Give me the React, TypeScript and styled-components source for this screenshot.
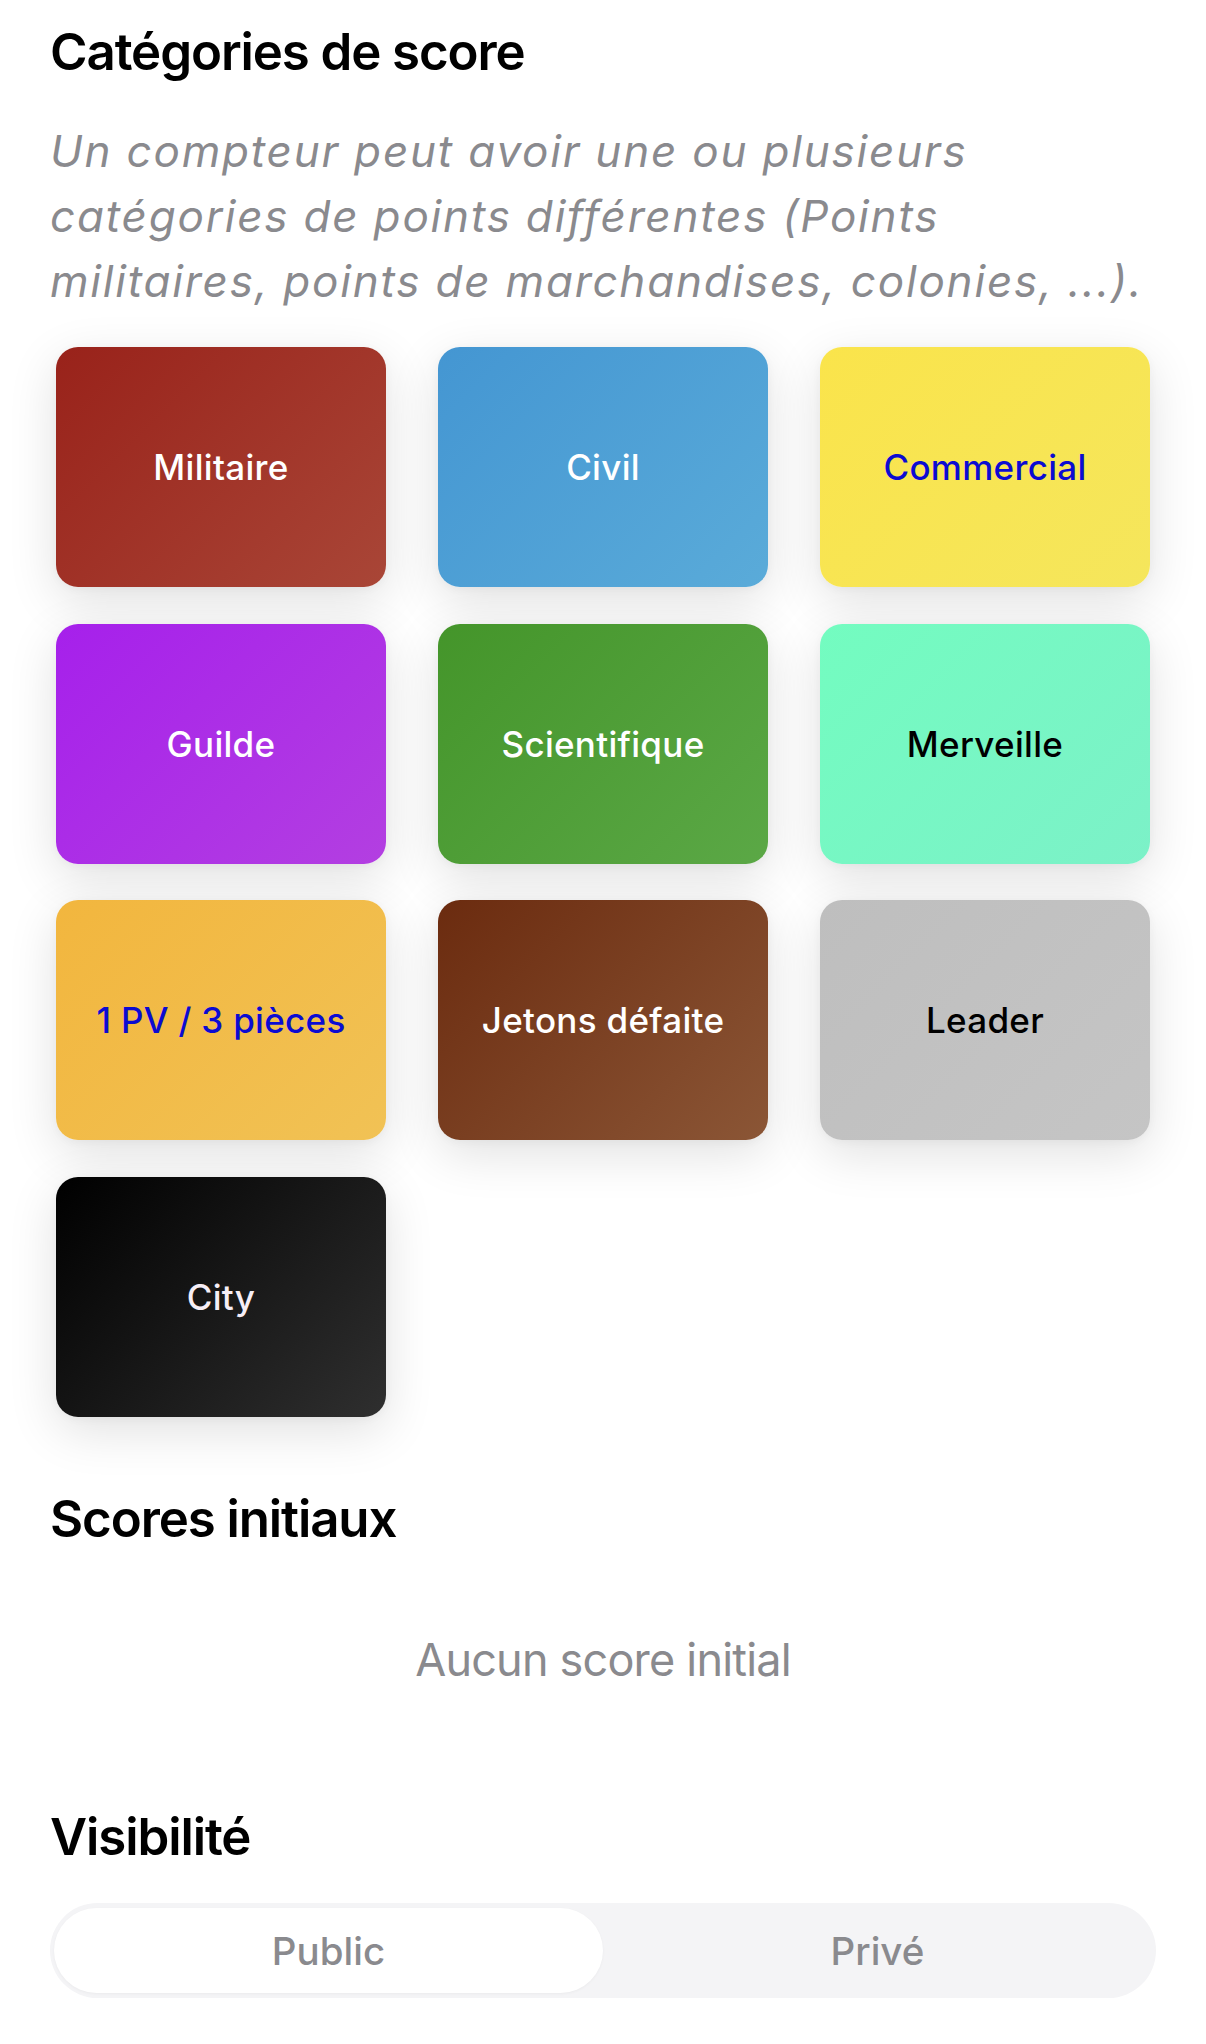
import React from "react";
import styled, { createGlobalStyle } from "styled-components";

const GlobalStyle = createGlobalStyle`
  html, body {
    margin: 0;
    padding: 0;
    background: #ffffff;
  }
  body {
    font-family: Inter, "Noto Sans", "Liberation Sans", sans-serif;
    -webkit-font-smoothing: antialiased;
  }
  * { box-sizing: border-box; }
`;

const Page = styled.main`
  display: flex;
  flex-direction: column;
  padding: 21px 50px 40px;
  width: 1206px;
`;

const SectionTitle = styled.h2<{ $mt?: number }>`
  margin: ${(p) => p.$mt ?? 0}px 0 0;
  font-family: Inter, "Liberation Sans", sans-serif;
  font-weight: 600;
  font-size: 51px;
  line-height: 61px;
  letter-spacing: -1.1px;
  color: #000000;
`;

const Description = styled.p`
  margin: 36.5px 0 0;
  font-family: Inter, "Liberation Sans", sans-serif;
  font-style: italic;
  font-weight: 400;
  font-size: 44px;
  line-height: 65px;
  letter-spacing: 1.8px;
  color: #8a8a8e;
`;

const CardGrid = styled.div`
  display: grid;
  grid-template-columns: repeat(3, 330px);
  column-gap: 52px;
  row-gap: 36.5px;
  padding: 0 6px;
  margin-top: 33.5px;
`;

const Card = styled.div<{ $from: string; $to: string; $fg: string }>`
  height: 240px;
  border-radius: 22px;
  background: linear-gradient(135deg, ${(p) => p.$from}, ${(p) => p.$to});
  color: ${(p) => p.$fg};
  display: flex;
  align-items: center;
  justify-content: center;
  font-family: Inter, "Liberation Sans", sans-serif;
  font-weight: 500;
  font-size: 35px;
  letter-spacing: 0.3px;
  box-shadow: 0 14px 50px rgba(0, 0, 0, 0.12), 0 2px 10px rgba(0, 0, 0, 0.04);
`;

const EmptyText = styled.p`
  margin: 83.5px 0 0;
  text-align: center;
  font-family: Inter, "Liberation Sans", sans-serif;
  font-weight: 400;
  font-size: 45px;
  line-height: 54px;
  letter-spacing: -0.8px;
  color: #8a8a8e;
`;

const Segmented = styled.div`
  display: flex;
  margin-top: 36px;
  height: 95px;
  padding: 5px 4px;
  border-radius: 48px;
  background: #f4f4f6;
`;

const Segment = styled.div<{ $active?: boolean }>`
  flex: 1;
  display: flex;
  align-items: center;
  justify-content: center;
  border-radius: 44px;
  background: ${(p) => (p.$active ? "#ffffff" : "transparent")};
  box-shadow: ${(p) => (p.$active ? "0 1px 3px rgba(0,0,0,0.04)" : "none")};
  font-family: Inter, "Liberation Sans", sans-serif;
  font-weight: 500;
  font-size: 38.5px;
  color: #8a8a8e;
`;

type Category = { label: string; from: string; to: string; fg: string };

const categories: Category[] = [
  { label: "Militaire", from: "#99221a", to: "#a94637", fg: "#ffffff" },
  { label: "Civil", from: "#4496d2", to: "#5aabd9", fg: "#ffffff" },
  { label: "Commercial", from: "#fae44b", to: "#f5e65c", fg: "#0b0bd2" },
  { label: "Guilde", from: "#a620eb", to: "#b33fe1", fg: "#ffffff" },
  { label: "Scientifique", from: "#44952a", to: "#5ba846", fg: "#ffffff" },
  { label: "Merveille", from: "#73fcc0", to: "#7cf1c8", fg: "#000000" },
  { label: "1 PV / 3 pièces", from: "#f2b63e", to: "#f1c255", fg: "#0b0bd2" },
  { label: "Jetons défaite", from: "#6b2b0f", to: "#8b5636", fg: "#ffffff" },
  { label: "Leader", from: "#bebebe", to: "#c5c5c5", fg: "#000000" },
  { label: "City", from: "#000000", to: "#2f2f2f", fg: "#f6eef6" },
];

export default function App() {
  return (
    <>
      <GlobalStyle />
      <Page>
        <SectionTitle>Catégories de score</SectionTitle>
        <Description>
          Un compteur peut avoir une ou plusieurs catégories de points
          différentes (Points militaires, points de marchandises, colonies,
          ...).
        </Description>
        <CardGrid>
          {categories.map((c) => (
            <Card key={c.label} $from={c.from} $to={c.to} $fg={c.fg}>
              {c.label}
            </Card>
          ))}
        </CardGrid>
        <SectionTitle $mt={71.5}>Scores initiaux</SectionTitle>
        <EmptyText>Aucun score initial</EmptyText>
        <SectionTitle $mt={119.5}>Visibilité</SectionTitle>
        <Segmented>
          <Segment $active>Public</Segment>
          <Segment>Privé</Segment>
        </Segmented>
      </Page>
    </>
  );
}
